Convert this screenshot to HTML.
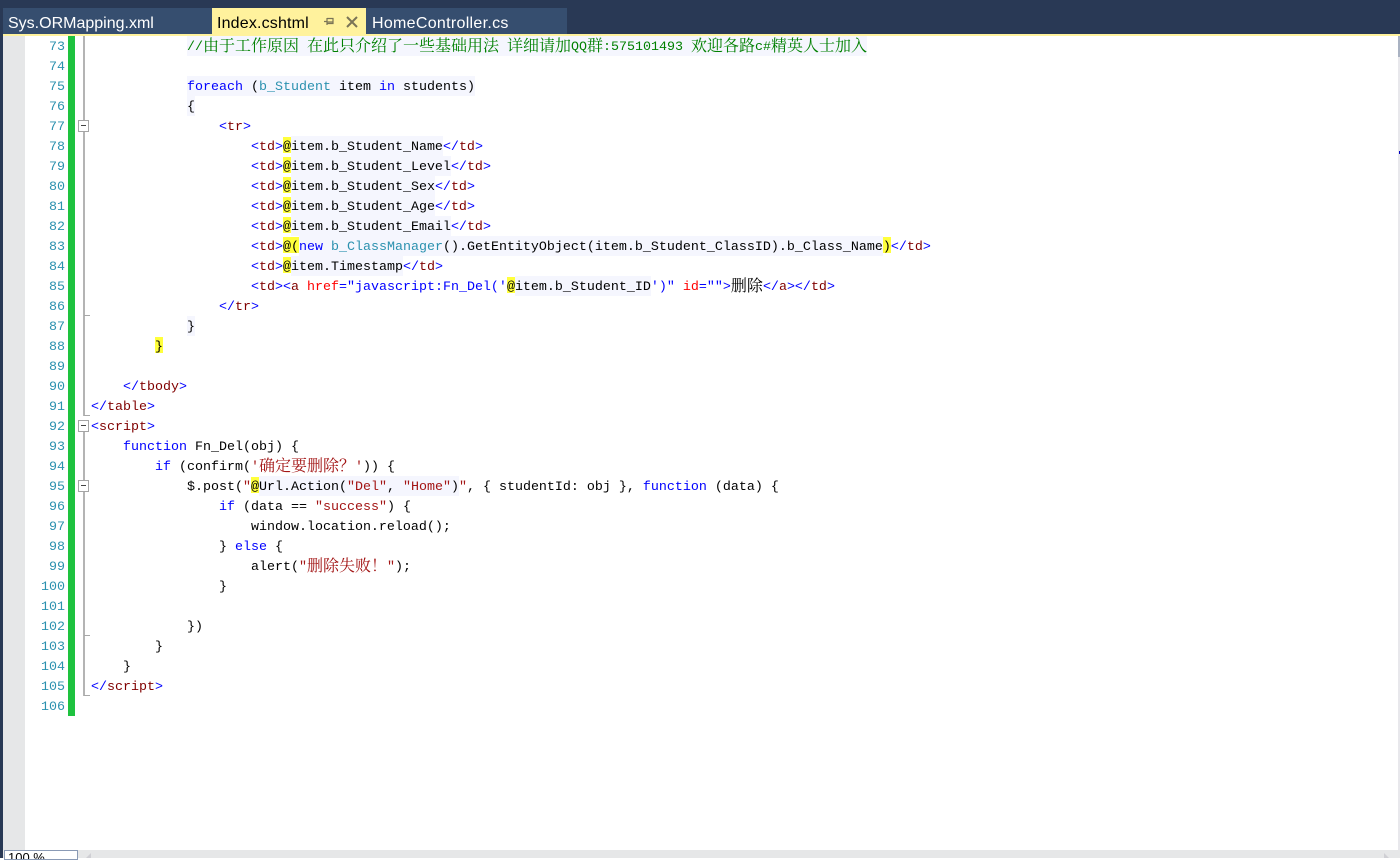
<!DOCTYPE html>
<html lang="zh-CN"><head><meta charset="utf-8"><title>Index.cshtml</title>
<style>
html,body{margin:0;padding:0;width:1400px;height:858px;overflow:hidden;background:#fff}
.a{position:absolute}
.tab{position:absolute;top:8px;height:26px;background:#364e6f;color:#fff;font:16px/31px "Liberation Sans",sans-serif;white-space:pre}
.l{position:absolute;left:91px;height:20px;line-height:24px;font-family:"Liberation Mono","Noto Serif CJK SC",monospace;font-size:13.333px;color:#000;white-space:pre}
.n{position:absolute;left:25px;width:40px;text-align:right;height:20px;line-height:24px;font-family:"Liberation Mono",monospace;font-size:13.333px;color:#2b91af}
.b{color:#00f}.m{color:#800000}.r{color:#f00}.s{color:#a31515}.g{color:#008000}.t{color:#2b91af}
.h{background:#f5f6fe;display:inline-block;height:20px;vertical-align:top}
.y{background:linear-gradient(#fff0 1px,#ffff3c 1px,#ffff3c 17px,#fff0 17px);display:inline-block;height:20px;vertical-align:top}
.c{font-family:"Noto Serif CJK SC","Liberation Mono",serif;font-size:16px;line-height:0;position:relative;top:1px}
.f{position:absolute;left:78px;width:9px;height:10px;border:1px solid #a5a5a5;background:#fff}
.f:after{content:"";position:absolute;left:2px;top:4px;width:5px;height:1px;background:#444}
.v{position:absolute;left:83px;width:2px;background:#b4b4b4}
.k{position:absolute;left:84px;width:6px;height:1px;background:#a8a8a8}
</style></head><body>
<div class="a" style="left:0;top:0;width:1400px;height:34px;background:#293955"></div>
<div class="a" style="left:0;top:34px;width:3px;height:824px;background:#293955"></div>
<div class="tab" style="left:3px;width:209px;padding-left:5px;box-sizing:border-box">Sys.ORMapping.xml</div>
<div class="tab" style="left:212px;width:154px;padding-left:5px;box-sizing:border-box;background:#fff29d;color:#000;letter-spacing:.17px">Index.cshtml</div>
<svg class="a" style="left:322px;top:14px" width="36" height="16" viewBox="0 0 36 16"><path d="M2 7.5H5M5 4V11M5 4.5H11V9.5H5M5 8H11" fill="none" stroke="#7a7456" stroke-width="1.2"/><path d="M25 3L35 13M35 3L25 13" fill="none" stroke="#7a7456" stroke-width="2"/></svg>
<div class="tab" style="left:366px;width:201px;padding-left:6px;box-sizing:border-box;letter-spacing:.3px">HomeController.cs</div>
<div class="a" style="left:3px;top:34px;width:1397px;height:2px;background:#fff29d"></div>
<div class="a" style="left:3px;top:36px;width:22px;height:814px;background:#e6e7e8"></div>
<div class="a" style="left:68px;top:36px;width:7px;height:680px;background:#1ec23f"></div>
<div class="a" style="left:1398px;top:36px;width:2px;height:814px;background:#e8e8ec"></div>
<div class="a" style="left:1398px;top:36px;width:2px;height:21px;background:#a9b2c2"></div>
<div class="a" style="left:1399px;top:151px;width:1px;height:3px;background:#0000c0"></div>
<div class="a" style="left:3px;top:850px;width:1397px;height:8px;background:#e6e7e8"></div>
<div class="a" style="left:4px;top:850px;width:74px;height:10px;box-sizing:border-box;border:1px solid #8a9ab5;background:#fff;font:13px/14px 'Liberation Sans',sans-serif;padding-left:3px;overflow:hidden">100 %</div>
<svg class="a" style="left:86px;top:853px" width="8" height="5"><path d="M0 5L5 0V5Z" fill="#cfcfd4"/></svg>
<svg class="a" style="left:1384px;top:853px" width="8" height="5"><path d="M0 0L5 5H0Z" fill="#cfcfd4"/></svg>

<div class="v" style="top:36px;height:280px"></div><div class="k" style="top:315px"></div>
<div class="v" style="top:316px;height:100px"></div><div class="k" style="top:415px"></div>
<div class="v" style="top:432px;height:264px"></div><div class="k" style="top:635px"></div><div class="k" style="top:695px"></div>
<div class="f" style="top:120px"></div><div class="f" style="top:420px"></div><div class="f" style="top:480px"></div>

<div class="n" style="top:36px">73</div><div class="n" style="top:56px">74</div><div class="n" style="top:76px">75</div><div class="n" style="top:96px">76</div><div class="n" style="top:116px">77</div><div class="n" style="top:136px">78</div><div class="n" style="top:156px">79</div><div class="n" style="top:176px">80</div><div class="n" style="top:196px">81</div><div class="n" style="top:216px">82</div><div class="n" style="top:236px">83</div><div class="n" style="top:256px">84</div><div class="n" style="top:276px">85</div><div class="n" style="top:296px">86</div><div class="n" style="top:316px">87</div><div class="n" style="top:336px">88</div><div class="n" style="top:356px">89</div><div class="n" style="top:376px">90</div><div class="n" style="top:396px">91</div><div class="n" style="top:416px">92</div><div class="n" style="top:436px">93</div><div class="n" style="top:456px">94</div><div class="n" style="top:476px">95</div><div class="n" style="top:496px">96</div><div class="n" style="top:516px">97</div><div class="n" style="top:536px">98</div><div class="n" style="top:556px">99</div><div class="n" style="top:576px">100</div><div class="n" style="top:596px">101</div><div class="n" style="top:616px">102</div><div class="n" style="top:636px">103</div><div class="n" style="top:656px">104</div><div class="n" style="top:676px">105</div><div class="n" style="top:696px">106</div>

<div class="l" style="top:36px">            <span class="h g">//<span class="c">由于工作原因</span> <span class="c">在此只介绍了一些基础用法</span> <span class="c">详细请加</span>QQ<span class="c">群</span>:575101493 <span class="c">欢迎各路</span>c#<span class="c">精英人士加入</span></span></div>
<div class="l" style="top:76px">            <span class="h"><span class="b">foreach</span> (<span class="t">b_Student</span> item <span class="b">in</span> students)</span></div>
<div class="l" style="top:96px">            <span class="h">{</span></div>
<div class="l" style="top:116px">                <span class="b">&lt;</span><span class="m">tr</span><span class="b">&gt;</span></div>
<div class="l" style="top:136px">                    <span class="b">&lt;</span><span class="m">td</span><span class="b">&gt;</span><span class="y">@</span><span class="h">item.b_Student_Name</span><span class="b">&lt;/</span><span class="m">td</span><span class="b">&gt;</span></div>
<div class="l" style="top:156px">                    <span class="b">&lt;</span><span class="m">td</span><span class="b">&gt;</span><span class="y">@</span><span class="h">item.b_Student_Level</span><span class="b">&lt;/</span><span class="m">td</span><span class="b">&gt;</span></div>
<div class="l" style="top:176px">                    <span class="b">&lt;</span><span class="m">td</span><span class="b">&gt;</span><span class="y">@</span><span class="h">item.b_Student_Sex</span><span class="b">&lt;/</span><span class="m">td</span><span class="b">&gt;</span></div>
<div class="l" style="top:196px">                    <span class="b">&lt;</span><span class="m">td</span><span class="b">&gt;</span><span class="y">@</span><span class="h">item.b_Student_Age</span><span class="b">&lt;/</span><span class="m">td</span><span class="b">&gt;</span></div>
<div class="l" style="top:216px">                    <span class="b">&lt;</span><span class="m">td</span><span class="b">&gt;</span><span class="y">@</span><span class="h">item.b_Student_Email</span><span class="b">&lt;/</span><span class="m">td</span><span class="b">&gt;</span></div>
<div class="l" style="top:236px">                    <span class="b">&lt;</span><span class="m">td</span><span class="b">&gt;</span><span class="y">@(</span><span class="h"><span class="b">new</span> <span class="t">b_ClassManager</span>().GetEntityObject(item.b_Student_ClassID).b_Class_Name</span><span class="y">)</span><span class="b">&lt;/</span><span class="m">td</span><span class="b">&gt;</span></div>
<div class="l" style="top:256px">                    <span class="b">&lt;</span><span class="m">td</span><span class="b">&gt;</span><span class="y">@</span><span class="h">item.Timestamp</span><span class="b">&lt;/</span><span class="m">td</span><span class="b">&gt;</span></div>
<div class="l" style="top:276px">                    <span class="b">&lt;</span><span class="m">td</span><span class="b">&gt;&lt;</span><span class="m">a</span> <span class="r">href</span><span class="b">="javascript:Fn_Del('</span><span class="y">@</span><span class="h">item.b_Student_ID</span><span class="b">')"</span> <span class="r">id</span><span class="b">=""&gt;</span><span class="c">删除</span><span class="b">&lt;/</span><span class="m">a</span><span class="b">&gt;&lt;/</span><span class="m">td</span><span class="b">&gt;</span></div>
<div class="l" style="top:296px">                <span class="b">&lt;/</span><span class="m">tr</span><span class="b">&gt;</span></div>
<div class="l" style="top:316px">            <span class="h">}</span></div>
<div class="l" style="top:336px">        <span class="y">}</span></div>
<div class="l" style="top:376px">    <span class="b">&lt;/</span><span class="m">tbody</span><span class="b">&gt;</span></div>
<div class="l" style="top:396px"><span class="b">&lt;/</span><span class="m">table</span><span class="b">&gt;</span></div>
<div class="l" style="top:416px"><span class="b">&lt;</span><span class="m">script</span><span class="b">&gt;</span></div>
<div class="l" style="top:436px">    <span class="b">function</span> Fn_Del(obj) {</div>
<div class="l" style="top:456px">        <span class="b">if</span> (confirm(<span class="s">'<span class="c">确定要删除？</span>'</span>)) {</div>
<div class="l" style="top:476px">            $.post(<span class="s">"</span><span class="y">@</span><span class="h">Url.Action(<span class="s">"Del"</span>, <span class="s">"Home"</span>)</span><span class="s">"</span>, { studentId: obj }, <span class="b">function</span> (data) {</div>
<div class="l" style="top:496px">                <span class="b">if</span> (data == <span class="s">"success"</span>) {</div>
<div class="l" style="top:516px">                    window.location.reload();</div>
<div class="l" style="top:536px">                } <span class="b">else</span> {</div>
<div class="l" style="top:556px">                    alert(<span class="s">"<span class="c">删除失败！</span>"</span>);</div>
<div class="l" style="top:576px">                }</div>
<div class="l" style="top:616px">            })</div>
<div class="l" style="top:636px">        }</div>
<div class="l" style="top:656px">    }</div>
<div class="l" style="top:676px"><span class="b">&lt;/</span><span class="m">script</span><span class="b">&gt;</span></div>
</body></html>
